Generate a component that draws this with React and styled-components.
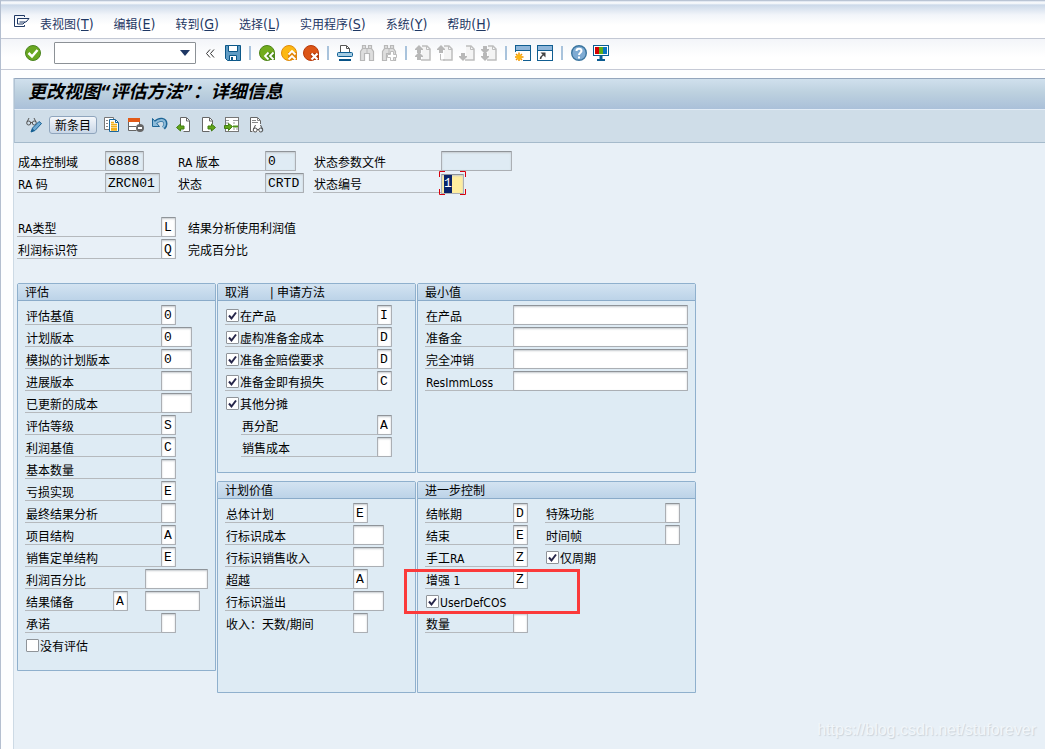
import React, { useEffect, useId, useRef } from "react";
import styled, { createGlobalStyle, css } from "styled-components";

const menus = [
    ["表视图", "T"],
    ["编辑", "E"],
    ["转到", "G"],
    ["选择", "L"],
    ["实用程序", "S"],
    ["系统", "Y"],
    ["帮助", "H"],
];

// w: label width, f: field width
const evaluationRows = [
    { label: "评估基值", w: 136, f: 15, value: "0" },
    { label: "计划版本", w: 136, f: 31, value: "0" },
    { label: "模拟的计划版本", w: 136, f: 31, value: "0" },
    { label: "进展版本", w: 136, f: 31 },
    { label: "已更新的成本", w: 136, f: 31 },
    { label: "评估等级", w: 136, f: 15, value: "S" },
    { label: "利润基值", w: 136, f: 15, value: "C" },
    { label: "基本数量", w: 136, f: 15 },
    { label: "亏损实现", w: 136, f: 15, value: "E" },
    { label: "最终结果分析", w: 136, f: 15 },
    { label: "项目结构", w: 136, f: 15, value: "A" },
    { label: "销售定单结构", w: 136, f: 15, value: "E" },
    { label: "利润百分比", w: 120, f: 63 },
];

const cancelRows = [
    { label: "在产品", value: "I" },
    { label: "虚构准备金成本", value: "D" },
    { label: "准备金赔偿要求", value: "D" },
    { label: "准备金即有损失", value: "C" },
];

const planRows = [
    { label: "总体计划", w: 128, f: 15, value: "E" },
    { label: "行标识成本", w: 128, f: 31 },
    { label: "行标识销售收入", w: 128, f: 31 },
    { label: "超越", w: 128, f: 15, value: "A" },
    { label: "行标识溢出", w: 128, f: 31 },
    { label: "收入：天数/期间", w: 128, f: 15, plain: true },
];

const controlRows = [
    { label: "结帐期", w: 88, f: 15, value: "D" },
    { label: "结束", w: 88, f: 15, value: "E" },
    { label: "手工RA", w: 88, f: 15, value: "Z" },
    { label: "增强 1", w: 88, f: 15, value: "Z" },
];

const Svg = ({ children, w = 16, h = 16 }) => (
    <svg width={w} height={h} viewBox={`0 0 ${w} ${h}`} fill="none" aria-hidden="true">{children}</svg>
);

const PagePath = () => (
    <>
        <path d="M7 1h5v4h3v10H7z" fill="#f4f4f4" />
        <path d="M7 1h5l3 3v11H6" stroke="#bdbdbd" strokeWidth="1.5" />
        <path d="M11.5 1v3.500h3.500" stroke="#bdbdbd" />
    </>
);

const UpArrow = ({ y = 0 }) => <path transform={`translate(0 ${y})`} d="M4 0l4 4v1H6v3H2V5H0V4z" fill="#b8b8b8" />;

const DownArrow = ({ y = 0 }) => <path transform={`translate(0 ${y})`} d="M4 8l4-4V3H6V0H2v3H0v1z" fill="#b8b8b8" />;

const Binoculars = () => (
    <>
        <path d="M3.5.5h3v3h3v-3h3v3l2 3v9h-4v-7h-5v7h-4v-9l2-3z" fill="#dedede" stroke="#b8b8b8" strokeWidth="1.2" />
        <path d="M3 3.500h3M10 3.500h3M8 4v5" stroke="#b8b8b8" />
    </>
);

const Glasses = () => (
    <>
        <circle cx="2.7" cy="6" r="2" />
        <circle cx="8.3" cy="6" r="2" />
        <path d="M1 5l2-4M10 5L8 1M4.7 5.5h1.6" />
    </>
);

const standardIcons = [
    ["后退", <Svg key="i">
        <circle cx="8" cy="8" r="7.5" fill="#72ac1d" stroke="#4d8418" />
        <path d="M9 7l-4 4 4 4h7V8z" fill="#508a1c" />
        <path d="M9.5 7.5L6 11l3.5 3.5M14.5 7.5L11 11l3.5 3.5" stroke="#fff" strokeWidth="1.8" />
    </Svg>],
    ["退出", <Svg key="i">
        <circle cx="8" cy="8" r="7.5" fill="#fcb813" stroke="#e08a0a" />
        <path d="M7 7h9v8H7z" fill="#e2870d" />
        <path d="M7.5 9.5L11 6l3.5 3.5M7.5 14.5L11 11l3.5 3.5" stroke="#fff" strokeWidth="1.8" />
    </Svg>],
    ["取消", <Svg key="i">
        <circle cx="8" cy="8" r="7.5" fill="#dc5516" stroke="#b83a0a" />
        <path d="M7 8h9v7H9z" fill="#b33a08" />
        <path d="M8.5 8.5l6 6M14.5 8.5l-6 6" stroke="#fff" strokeWidth="2.2" />
    </Svg>],
    null,
    ["打印", <Svg key="i">
        <path d="M3.5 7V.5h6l3 3V7" fill="#fff" stroke="#555" />
        <path d="M9.5 1v2.5h3" stroke="#555" />
        <rect x=".5" y="7.5" width="15" height="4" rx="1" fill="#a4cbe2" stroke="#0b5c92" />
        <path d="M2 15h12" stroke="#075387" strokeWidth="2" />
    </Svg>],
    ["查找", <Svg key="i"><Binoculars /></Svg>],
    ["继续查找", <Svg key="i">
        <Binoculars />
        <path d="M9.5 6.5h3v3h3v3h-3v3h-3v-3h-3v-3h3z" fill="#fff" stroke="#bdbdbd" />
    </Svg>],
    null,
    ["首页", <Svg key="i"><PagePath /><UpArrow y={0} /><UpArrow y={7} /></Svg>],
    ["上一页", <Svg key="i"><PagePath /><UpArrow y={0} /><path d="M3.5 9v6H8" stroke="#bdbdbd" /></Svg>],
    ["下一页", <Svg key="i"><PagePath /><DownArrow y={8} /></Svg>],
    ["末页", <Svg key="i"><PagePath /><DownArrow y={1} /><DownArrow y={8} /></Svg>],
    null,
    ["新会话", <Svg key="i">
        <rect x=".5" y=".5" width="15" height="15" fill="#fff" stroke="#115e91" />
        <path d="M1 3h14" stroke="#8fb6da" strokeWidth="4" />
        <path d="M1 5.5h14" stroke="#115e91" />
        <path d="M0 7h8v9H0z" fill="#fff" />
        <path d="M4 7.5v9M0 12h8.5M1 9l6 6M7 9l-6 6" stroke="#f29400" strokeWidth="1.5" />
        <circle cx="4" cy="12" r="2.5" fill="#fdb813" />
    </Svg>],
    ["快捷方式", <Svg key="i">
        <rect x=".5" y=".5" width="15" height="15" fill="#fff" stroke="#115e91" />
        <path d="M1 3h14" stroke="#8fb6da" strokeWidth="4" />
        <path d="M1 5.5h14" stroke="#115e91" />
        <path d="M3.5 14c0-2 1-3 3-4.5" stroke="#444" strokeWidth="1.5" />
        <path d="M3.5 7.5h5v5z" fill="#444" />
    </Svg>],
    null,
    ["帮助", <Svg key="i">
        <circle cx="8" cy="8" r="7.3" fill="#7fabd3" stroke="#3b759f" strokeWidth="1.4" />
        <path d="M5.5 6c0-3 5-3 5 0 0 1.700-2.500 1.700-2.500 4" stroke="#fff" strokeWidth="2" />
        <path d="M7 11.5h2v2H7z" fill="#fff" />
    </Svg>],
    ["布局", <Svg key="i">
        <rect x=".5" y=".5" width="15" height="10" fill="#fff" stroke="#0b5c92" />
        <path d="M2 2h4v7H2z" fill="#d40000" />
        <path d="M6 2h4v7H6z" fill="#5fae17" />
        <path d="M10 2h4v7h-4z" fill="#0a76c0" />
        <path d="M8 11v3" stroke="#0b5c92" strokeWidth="3" />
        <path d="M4 15h8" stroke="#0b5c92" strokeWidth="2" />
    </Svg>],
];

const applicationIcons = [
    ["复制为", <Svg key="i">
        <path d="M5 12.5H.5V.5h9V2" fill="#fff" stroke="#777" />
        <path d="M2 3.5h2M2 6.5h2M2 9.5h2" stroke="#888" />
        <path d="M5.5 2.5h6l3 3v9h-9z" fill="#fff" stroke="#1b6599" />
        <path d="M7 5.5h3M7 7.5h6M7 9.5h6M7 11.5h6M7 13h6" stroke="#f3b01a" strokeWidth="1.3" />
        <path d="M11.5 3v2.5H14" stroke="#1b6599" />
    </Svg>],
    ["删除", <Svg key="i">
        <path d="M1 5h11v9H1z" fill="#fff" />
        <path d="M.5 4v9.5h8M1 9.5h7M11.5 4v4" stroke="#666" />
        <path d="M0 1h12v4H0z" fill="#e25a17" />
        <circle cx="12" cy="11" r="4" fill="#666" />
        <path d="M10 11h4" stroke="#fff" strokeWidth="2" />
    </Svg>],
    ["撤消", <Svg key="i">
        <path d="M2.5 6c5-5 11-4 11 1 0 2-1 3-2 4" stroke="#1d6596" strokeWidth="4" />
        <path d="M.5 1.5v8h7z" fill="#8dbbd9" stroke="#1d6596" />
        <path d="M3 6c5-4.500 10-4 10 1 0 2-1 2.500-2 3.500" stroke="#8dbbd9" strokeWidth="2" />
    </Svg>],
    ["上一条目", <Svg key="i">
        <path d="M4.5 7V.5h6l3 3v11h-6" fill="#fff" stroke="#666" />
        <path d="M10.5 1v3H13" stroke="#666" />
        <path d="M.5 10.5l4-3.500v2h3.500v3H4.5v2z" fill="#62a61a" stroke="#427c13" />
    </Svg>],
    ["下一条目", <Svg key="i">
        <path d="M12.500 7V3.500l-3-3h-7v14h7" fill="#fff" stroke="#666" />
        <path d="M9.5 1v3h3" stroke="#666" />
        <path d="M15.500 10.500l-4-3.500v2H8v3h3.500v2z" fill="#62a61a" stroke="#427c13" />
    </Svg>],
    ["其他条目", <Svg key="i">
        <rect x="1.5" y=".5" width="13" height="14" fill="#fff" stroke="#777" />
        <path d="M2 3.5h3M2 6h3M9 3.5h5M9 6h2M12 12h2M9 12h2" stroke="#999" />
        <path d="M9 9.5h5" stroke="#4e9418" strokeWidth="2" />
        <path d="M8.500 9.500l-4-3v2H.5v3h4v2z" fill="#62a61a" stroke="#427c13" />
    </Svg>],
    ["显示文档", <Svg key="i">
        <path d="M2.5 15V.5h7l3 3V15z" fill="#fff" />
        <path d="M2.5 15V.5h7l3 3V7M2.5 14.500h2" stroke="#666" />
        <path d="M9.5 1v2.5h3M4 3.5h4M4 5.5h6" stroke="#888" />
        <g stroke="#4e4e4e" transform="translate(4.5 7)"><Glasses /></g>
    </Svg>],
];

const Tick = () => (
    <TickSvg width="13" height="13" viewBox="0 0 13 13" fill="none" aria-hidden="true">
        <path d="M3 6.5l2.500 3L10 3.500" stroke="#26264a" strokeWidth="2" />
    </TickSvg>
);

const Check = ({ label, checked, width }) => (
    <CheckLabel $width={width}>
        <CheckBox>
            <input type="checkbox" defaultChecked={checked} />
            <Tick />
        </CheckBox>
        {label}
    </CheckLabel>
);

const FieldRow = ({ label, w, f, value = "", plain, readOnly, note }) => {
    const id = useId();
    return (
        <Row>
            <Label htmlFor={id} $width={w} $plain={plain}>{label}</Label>
            <Field id={id} $width={f} defaultValue={value} readOnly={readOnly} />
            {note ? <Note>{note}</Note> : null}
        </Row>
    );
};

const StatusNumber = () => {
    const ref = useRef(null);

    useEffect(() => {
        ref.current.focus();
        ref.current.select();
    }, []);

    return (
        <Row>
            <Label htmlFor="status-number" $width={128}>状态编号</Label>
            <CursorFrame>
                <ActiveField id="status-number" ref={ref} $width={23} defaultValue="1" />
                <svg width="27" height="24" viewBox="0 0 27 24" fill="none" stroke="#d8000c" aria-hidden="true">
                    <path d="M.5 6V.5H6M21 .5h5.5V6M.5 18v5.500H6M21 23.500h5.500V18" />
                </svg>
            </CursorFrame>
        </Row>
    );
};

const App = () => {
    return (
        <Window>
            <GlobalStyle />
            <MenuBar>
                <MenuIcon type="button" aria-label="菜单">
                    <Svg w={16} h={12}>
                        <path d="M10.5 2V.5H.5v11h10V10" stroke="#1f3864" />
                        <path d="M3.5 3.5H15l-3 3.500H5.500M3.5 3.500v5.500H9l2-2" stroke="#1f3864" />
                    </Svg>
                </MenuIcon>
                {menus.map(([name, key]) => (
                    <MenuButton type="button" key={key}>{name}<span>(<u>{key}</u>)</span></MenuButton>
                ))}
            </MenuBar>

            <StandardBar>
                <IconButton type="button" aria-label="回车">
                    <Svg>
                        <circle cx="8" cy="8" r="7.5" fill="#69a722" stroke="#4b8420" />
                        <path d="M3.5 8L7 11.500 12.500 5" stroke="#fff" strokeWidth="2.5" />
                    </Svg>
                </IconButton>
                <Command>
                    <input aria-label="命令" />
                    <Svg w={10} h={6}><path d="M0 0h10L5 6z" fill="#1f3864" /></Svg>
                </Command>
                <Collapse type="button" aria-label="收起">
                    <Svg w={9} h={9}><path d="M4 .5l-3.500 4L4 8.500M8 .5l-3.500 4L8 8.500" stroke="#333" /></Svg>
                </Collapse>
                <IconButton type="button" aria-label="保存">
                    <Svg>
                        <path d="M.5.5h15v15h-13l-2-2z" fill="#5f9bc4" stroke="#0b5788" />
                        <path d="M3.5.5h9v6h-9z" fill="#fff" stroke="#0b5788" />
                        <path d="M4.5 15.5v-5h7v5z" fill="#fff" stroke="#0b5788" />
                        <path d="M6 12h2v3H6z" fill="#0b5788" />
                    </Svg>
                </IconButton>
                <Divider />
                {standardIcons.map((item, index) => (
                    item ?
                        <IconButton type="button" key={index} aria-label={item[0]}>{item[1]}</IconButton>
                        :
                        <Divider key={index} />
                ))}
            </StandardBar>

            <Main>
                <TitleBar><h1>更改视图“评估方法”：详细信息</h1></TitleBar>
                <ApplicationBar>
                    <IconButton type="button" aria-label="显示/更改">
                        <Svg>
                            <g stroke="#555"><Glasses /></g>
                            <path d="M5 15l1.500-4L13 4.500l2.500 2L9 13.500z" fill="#6fa9d2" stroke="#155f92" />
                            <path d="M5 15l1.500-3.500 2 2z" fill="#155f92" />
                        </Svg>
                    </IconButton>
                    <TextButton type="button">新条目</TextButton>
                    {applicationIcons.map(([name, icon]) => (
                        <IconButton type="button" key={name} aria-label={name}>{icon}</IconButton>
                    ))}
                </ApplicationBar>

                <Form>
                    <HeaderFields>
                        <div>
                            <FieldRow label="成本控制域" w={88} f={39} value="6888" readOnly />
                            <FieldRow label="RA 码" w={88} f={55} value="ZRCN01" readOnly />
                        </div>
                        <div>
                            <FieldRow label="RA 版本" w={88} f={31} value="0" readOnly />
                            <FieldRow label="状态" w={88} f={39} value="CRTD" readOnly />
                        </div>
                        <div>
                            <FieldRow label="状态参数文件" w={128} f={71} readOnly />
                            <StatusNumber />
                        </div>
                    </HeaderFields>

                    <TypeFields>
                        <FieldRow label="RA类型" w={144} f={15} value="L" note="结果分析使用利润值" />
                        <FieldRow label="利润标识符" w={144} f={15} value="Q" note="完成百分比" />
                    </TypeFields>

                    <Groups>
                        <Column>
                            <Group $height={388}>
                                <h2>评估</h2>
                                <Rows>
                                    {evaluationRows.map((row) => <FieldRow key={row.label} {...row} />)}
                                    <Row>
                                        <Label htmlFor="reserve" $width={88}>结果储备</Label>
                                        <Field id="reserve" $width={15} defaultValue="A" />
                                        <SecondField aria-label="结果储备 2" $width={55} />
                                    </Row>
                                    <FieldRow label="承诺" w={136} f={15} />
                                    <Row><Check label="没有评估" /></Row>
                                </Rows>
                            </Group>
                        </Column>

                        <Column>
                            <Group $height={190}>
                                <h2><Half>取消</Half>| 申请方法</h2>
                                <Rows>
                                    {cancelRows.map((row) => (
                                        <Row key={row.label}>
                                            <Check label={row.label} checked width={152} />
                                            <Field aria-label={`${row.label}申请方法`} $width={15} defaultValue={row.value} />
                                        </Row>
                                    ))}
                                    <Row><Check label="其他分摊" checked /></Row>
                                    <Nested>
                                        <FieldRow label="再分配" w={136} f={15} value="A" />
                                        <FieldRow label="销售成本" w={136} f={15} />
                                    </Nested>
                                </Rows>
                            </Group>
                            <Group $height={212}>
                                <h2>计划价值</h2>
                                <Rows>
                                    {planRows.map((row) => <FieldRow key={row.label} {...row} />)}
                                </Rows>
                            </Group>
                        </Column>

                        <Column>
                            <Group $height={190}>
                                <h2>最小值</h2>
                                <Rows>
                                    {["在产品", "准备金", "完全冲销", "ResImmLoss"].map((label) => (
                                        <FieldRow key={label} label={label} w={88} f={175} />
                                    ))}
                                </Rows>
                            </Group>
                            <Group $height={212}>
                                <h2>进一步控制</h2>
                                <Split>
                                    <div>
                                        {controlRows.map((row) => <FieldRow key={row.label} {...row} />)}
                                        <Row><Check label="UserDefCOS" checked /></Row>
                                        <FieldRow label="数量" w={88} f={15} />
                                    </div>
                                    <div>
                                        <FieldRow label="特殊功能" w={120} f={15} />
                                        <FieldRow label="时间帧" w={120} f={15} />
                                        <Row><Check label="仅周期" checked /></Row>
                                    </div>
                                </Split>
                                <Highlight />
                            </Group>
                        </Column>
                    </Groups>
                </Form>
            </Main>
            <Watermark>https://blog.csdn.net/stuforever</Watermark>
        </Window>
    );
};

const GlobalStyle = createGlobalStyle`
* {
    box-sizing: border-box;
}
body {
    margin: 0;
    background: #e8f0f7;
    color: #000;
    font: 12px/20px "DejaVu Sans Condensed", "Noto Sans CJK SC", sans-serif;
}
button, input {
    font: inherit;
    color: inherit;
}
h1, h2 {
    margin: 0;
}
svg {
    display: block;
}
`;

const Window = styled.div`
    position: relative;
    display: flex;
    flex-direction: column;
    min-height: 100vh;
    border-left: 1px solid #b4bfd0;
    background: #fdfeff;
`;

const MenuBar = styled.nav`
    display: flex;
    align-items: center;
    gap: 20px;
    height: 39px;
    padding: 10px 13px 0;
    border-top: 1px solid #b9c4d4;
    border-bottom: 1px solid #c3c8d4;
    background: linear-gradient(#d9e2ee 0, #fff 2px, #ccd9e9 4px, #f2f5fa 14px, #fff 24px);
`;

const MenuButton = styled.button`
    padding: 0;
    border: 0;
    background: none;
    color: #1f3864;
    white-space: nowrap;
    span {
        font-size: 14px;
    }
`;

const MenuIcon = styled.button`
    padding: 0 0 8px;
    margin-right: -10px;
    border: 0;
    background: none;
`;

const StandardBar = styled.div`
    display: flex;
    align-items: center;
    gap: 6px;
    height: 31px;
    padding: 0 24px 2px;
    border-bottom: 1px solid #c6cad6;
    background: linear-gradient(#f3f5f9, #fff 60%);
`;

const IconButton = styled.button`
    flex: none;
    width: 16px;
    height: 16px;
    padding: 0;
    border: 0;
    background: none;
`;

const Collapse = styled(IconButton)`
    width: 17px;
    display: flex;
    align-items: center;
    justify-content: center;
`;

const Command = styled.div`
    position: relative;
    margin-left: 7px;
    input {
        display: block;
        width: 142px;
        height: 22px;
        border: 1px solid #8c9196;
        border-radius: 1px;
        background: #fff;
        outline: 0;
    }
    svg {
        position: absolute;
        right: 6px;
        top: 8px;
    }
`;

const Divider = styled.span`
    width: 6px;
    height: 14px;
    background: linear-gradient(#a9c3dc, #a9c3dc) center / 2px 100% no-repeat;
`;

const Main = styled.main`
    flex: 1;
    margin: 8px 0 0 12px;
    border-left: 1px solid #cddae5;
    background: #e8f0f7;
`;

const TitleBar = styled.header`
    height: 32px;
    padding: 0 13px;
    border-top: 1px solid #94a6bd;
    border-bottom: 1px solid #e2ecf6;
    border-left: 1px solid #b1c3d4;
    background: linear-gradient(#d0e0ed, #bdd1df 45%, #aac0d9);
    h1 {
        font-size: 18px;
        font-style: italic;
        line-height: 26px;
    }
`;

const ApplicationBar = styled.div`
    display: flex;
    align-items: center;
    gap: 8px;
    height: 33px;
    padding: 0 11px 3px;
    border-bottom: 1px solid #a5bacb;
    border-left: 1px solid #b1c3d4;
    background: #cfdde8;
`;

const TextButton = styled.button`
    width: 48px;
    height: 18px;
    margin: 0 -1px;
    padding: 0;
    border: 1px solid #8fa5bd;
    border-radius: 3px;
    background: linear-gradient(#f4f7fb, #c9d7e7);
    line-height: 18px;
    white-space: nowrap;
`;

const Form = styled.div`
    padding: 8px 3px 56px;
`;

const HeaderFields = styled.div`
    display: grid;
    grid-template-columns: 160px 136px 200px;
`;

const TypeFields = styled.div`
    margin-top: 22px;
`;

const Row = styled.div`
    display: flex;
    height: 22px;
`;

const underline = css`
    height: 20px;
    border-bottom: 1px solid #b5b9bd;
`;

const Label = styled.label`
    flex: none;
    width: ${(props) => props.$width}px;
    padding: 2px 0 0 1px;
    line-height: 20px;
    white-space: nowrap;
    ${(props) => !props.$plain && underline}
`;

const Field = styled.input`
    flex: none;
    width: ${(props) => props.$width}px;
    height: 20px;
    padding: 1px 0 0 2px;
    border: 1px solid #abafb4;
    border-top-color: #8f9499;
    border-radius: 1px;
    outline: 0;
    background: #fff;
    box-shadow: inset 0 1px 2px #c5cacf;
    font-family: "Liberation Mono", monospace;
    font-size: 13px;
    &:read-only {
        background: #dfebf4;
    }
`;

const SecondField = styled(Field)`
    margin-left: 17px;
`;

const ActiveField = styled(Field)`
    background: #ffee9f;
    &::selection {
        background: #0a246a;
        color: #fff;
    }
`;

const CursorFrame = styled.div`
    position: relative;
    svg {
        position: absolute;
        left: -2px;
        top: -2px;
        pointer-events: none;
    }
`;

const Note = styled.span`
    margin-left: 12px;
    padding-top: 2px;
    line-height: 20px;
`;

const Groups = styled.div`
    display: grid;
    grid-template-columns: 199fr 199fr 279fr;
    gap: 1px;
    max-width: 679px;
    margin-top: 22px;
`;

const Column = styled.div`
    display: flex;
    flex-direction: column;
    gap: 8px;
`;

const Group = styled.section`
    position: relative;
    min-height: ${(props) => props.$height}px;
    border: 1px solid #8fb0cd;
    border-radius: 2px 2px 0 0;
    background: #deebf4;
    h2 {
        display: flex;
        height: 17px;
        padding: 0 7px;
        border-bottom: 1px solid #8aabc9;
        background: linear-gradient(#d3e3f1, #bcd3e8);
        font-size: 12px;
        font-weight: normal;
        line-height: 19px;
        white-space: pre;
    }
`;

const Half = styled.span`
    width: 45px;
`;

const Rows = styled.div`
    padding: 4px 7px 0;
`;

const Nested = styled.div`
    margin-left: 16px;
`;

const Split = styled(Rows)`
    display: grid;
    grid-template-columns: 120px 1fr;
`;

const CheckLabel = styled.label`
    display: flex;
    width: ${(props) => (props.$width ? `${props.$width}px` : "auto")};
    padding: 2px 0 0 1px;
    line-height: 20px;
    white-space: nowrap;
    ${(props) => props.$width && underline}
`;

const CheckBox = styled.span`
    position: relative;
    width: 13px;
    height: 13px;
    margin: 2px 1px 0 0;
    input {
        appearance: none;
        display: block;
        width: 13px;
        height: 13px;
        margin: 0;
        border: 1px solid #8f9499;
        border-radius: 1px;
        background: #fff;
    }
    input:not(:checked) + svg {
        display: none;
    }
`;

const TickSvg = styled.svg`
    position: absolute;
    left: 0;
    top: 0;
    pointer-events: none;
`;

const Highlight = styled.div`
    position: absolute;
    left: -14px;
    top: 87px;
    width: 176px;
    height: 45px;
    border: 3px solid #fb3a3a;
    pointer-events: none;
`;

const Watermark = styled.div`
    position: absolute;
    right: 9px;
    bottom: 9px;
    color: #f1f6fa;
    font-family: "Liberation Sans", sans-serif;
    font-size: 16px;
    text-shadow: 1px 1px 1px #cbd3da;
`;

export default App;
